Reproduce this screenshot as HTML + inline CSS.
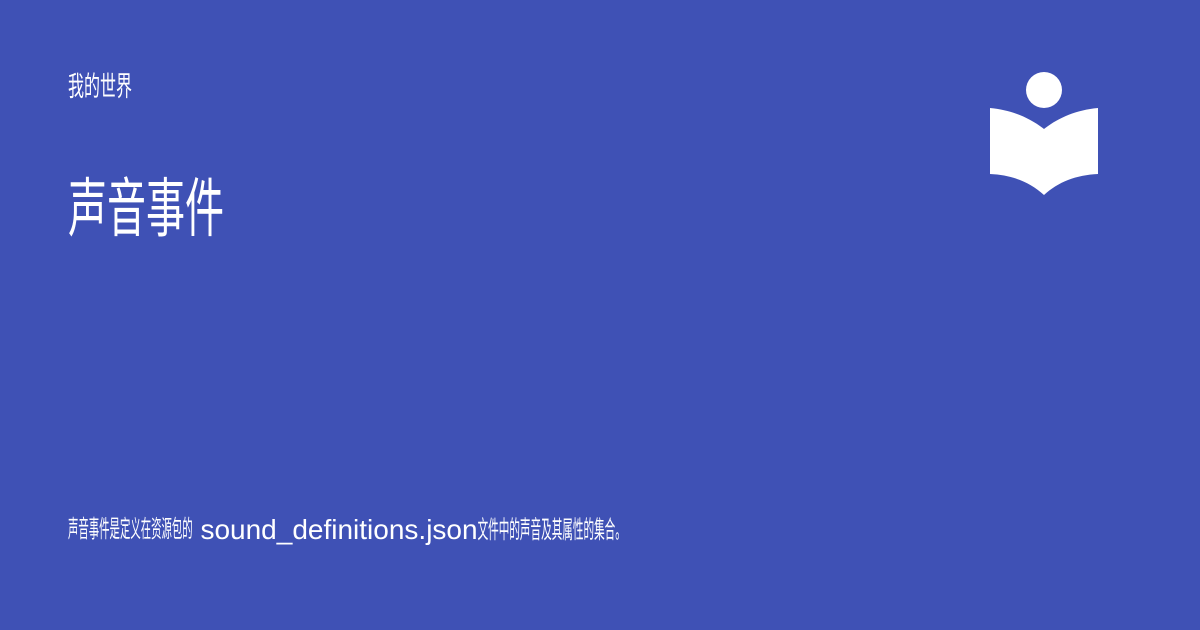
<!DOCTYPE html>
<html><head><meta charset="utf-8"><style>
html,body{margin:0;padding:0}
body{width:1200px;height:630px;background:#3f51b5;position:relative;overflow:hidden;color:#fff;font-family:"Liberation Sans","Noto Sans CJK SC",sans-serif}
.t{position:absolute;left:68px;white-space:nowrap}
.c{display:inline-block;transform-origin:50% 60%}
</style></head><body>
<div class="t" style="top:75px;line-height:32px"><span class="c" style="font-size:16px;transform:scaleY(1.7)">我的世界</span></div>
<div class="t" style="top:178px;line-height:76px"><span class="c" style="font-size:39px;transform:scaleY(1.65)">声音事件</span></div>
<div class="t" style="top:512px;line-height:36px"><span class="c" style="font-size:10.4px;transform:scaleY(2.3)">声音事件是定义在资源包的</span><span style="font-size:28px"> sound_definitions.json</span><span class="c" style="font-size:10.6px;transform:scaleY(2.3)">文件中的声音及其属性的集合。</span></div>
<svg style="position:absolute;left:0;top:0" width="1200" height="630">
<circle cx="1044" cy="90" r="18" fill="#fff"/>
<path d="M990 108 C1012 110 1030 118 1044 129 C1058 118 1076 110 1098 108 L1098 174 C1076 175 1058 182 1044 195 C1030 182 1012 175 990 174 Z" fill="#fff"/>
</svg>
</body></html>
